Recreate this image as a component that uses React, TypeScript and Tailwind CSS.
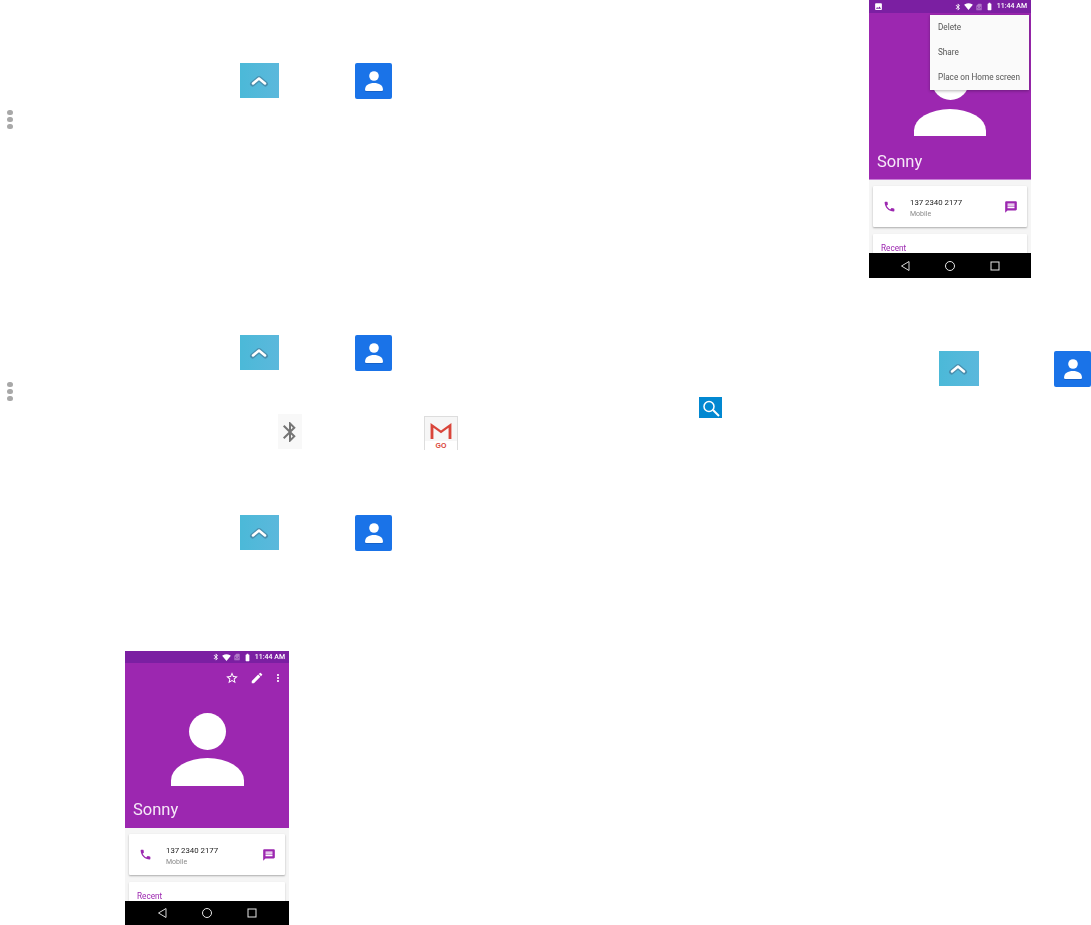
import { MdBluetooth, MdEdit, MdMoreVert, MdPhone, MdSignalWifi4Bar, MdStarBorder, MdMessage, MdImage, MdBatteryFull, MdSimCard } from "react-icons/md";

function ChevronTile({ className }: { className: string }) {
  return (
    <div className={`absolute h-[35px] bg-gradient-to-r from-[#4bb9d8] to-[#5bb8dc] flex items-center justify-center pr-[2px] ${className}`}>
      <svg width="20" height="14" viewBox="0 0 20 14" fill="none">
        <path d="M3.500 10 L10 4.500 L16.500 10" stroke="#4a8fae" strokeWidth="5" strokeLinecap="round" strokeLinejoin="round" />
        <path d="M4 9.500 L10 4.500 L16 9.500" stroke="#ffffff" strokeWidth="2.500" strokeLinecap="round" strokeLinejoin="round" />
      </svg>
    </div>
  );
}

function ContactTile({ className }: { className: string }) {
  return (
    <div className={`absolute w-[37px] h-[36px] rounded-[2px] bg-[#1a73e8] flex items-center justify-center ${className}`}>
      <svg width="20" height="23" viewBox="0 0 20 23">
        <path d="M1 21 C1 16 5 14 10 14 C15 14 19 16 19 21 Q19 22 17.500 22 L2.500 22 Q1 22 1 21 Z" fill="#0f4fa8" opacity="0.5" />
        <circle cx="10" cy="6" r="4.800" fill="#ffffff" />
        <path d="M1 20 C1 15 5 13 10 13 C15 13 19 15 19 20 Q19 21 17.500 21 L2.500 21 Q1 21 1 20 Z" fill="#ffffff" />
      </svg>
    </div>
  );
}

function Dots({ className }: { className: string }) {
  return (
    <div className={`absolute flex flex-col gap-[2px] ${className}`}>
      <div className="w-[6px] h-[5px] rounded-full bg-[#a8a8a8]" />
      <div className="w-[6px] h-[5px] rounded-full bg-[#a8a8a8]" />
      <div className="w-[6px] h-[5px] rounded-full bg-[#a8a8a8]" />
    </div>
  );
}

function Phone({ className, menu }: { className: string; menu?: boolean }) {
  return (
    <div className={`absolute flex flex-col overflow-hidden bg-[#f5f5f5] blur-[0.35px] ${className}`} style={{ fontFamily: "Roboto, sans-serif" }}>
      <div className={`shrink-0 bg-[#7b1fa2] flex items-center pl-[5px] pr-[4px] text-white ${menu ? "h-[13px]" : "h-[12px]"}`}>
        {menu ? <MdImage size={9} /> : null}
        <div className="ml-auto flex items-center gap-[2px]">
          <MdBluetooth size={8} />
          <MdSignalWifi4Bar size={9} />
          <MdSimCard size={8} className="opacity-40" />
          <MdBatteryFull size={9} />
          <span className="ml-[1px] text-[7px] leading-none font-medium">11:44 AM</span>
        </div>
      </div>
      <div className={`shrink-0 bg-[#9c27b0] flex flex-col ${menu ? "h-[167px] border-b border-[#c77fd6]" : "h-[165px]"}`}>
        <div className="h-[30px] shrink-0 flex items-center justify-end pr-[5px] text-white">
          {menu ? null : (
            <>
              <MdStarBorder size={14} />
              <MdEdit size={14} className="ml-[11px]" />
              <MdMoreVert size={12} className="ml-[8px]" />
            </>
          )}
        </div>
        <div className="flex flex-col items-center mt-[20px]">
          <div className="w-[37px] h-[37px] rounded-full bg-white" />
          <div className={`bg-white rounded-t-[50%_80%] ${menu ? "mt-[9px] w-[72px] h-[27px]" : "mt-[8px] w-[73px] h-[28px]"}`} />
        </div>
        <div className={`mt-auto pl-[8px] text-[16.5px] leading-[20px] text-[#f6e9f8] ${menu ? "pb-[7px]" : "pb-[8px]"}`}>Sonny</div>
      </div>
      <div className="flex-1 min-h-0 overflow-hidden px-[4px] pt-[6px] flex flex-col gap-[7px]">
        <div className="h-[41px] shrink-0 bg-white rounded-[1px] shadow-[0_1px_2px_rgba(0,0,0,0.3)] flex items-center pl-[10px] pr-[9px]">
          <MdPhone size={13} className="text-[#9c27b0]" />
          <div className="ml-[14px] mt-[4px] flex flex-col">
            <span className="text-[7.800px] leading-[12px] text-[#222222]">137 2340 2177</span>
            <span className="text-[7px] leading-[11px] text-[#8a8a8a]">Mobile</span>
          </div>
          <MdMessage size={14} className="ml-auto text-[#9c27b0]" />
        </div>
        <div className="h-[30px] shrink-0 bg-white rounded-[1px] shadow-[0_1px_2px_rgba(0,0,0,0.2)] pl-[8px] pt-[9px] text-[8.200px] leading-[11px] text-[#9c27b0]">Recent</div>
      </div>
      <div className={`shrink-0 bg-black flex items-center justify-center gap-[31px] ${menu ? "h-[25px]" : "h-[24px]"}`}>
        <svg width="14" height="14" viewBox="0 0 14 14" fill="none">
          <path d="M11 2.500 L3.500 7 L11 11.500 Z" stroke="#d8d8d8" strokeWidth="1" />
        </svg>
        <svg width="14" height="14" viewBox="0 0 14 14" fill="none">
          <circle cx="7" cy="7" r="4.500" stroke="#e8e8e8" strokeWidth="1" />
        </svg>
        <svg width="14" height="14" viewBox="0 0 14 14" fill="none">
          <rect x="3" y="3" width="8" height="8" stroke="#e8e8e8" strokeWidth="1" />
        </svg>
      </div>
      {menu ? (
        <div className="absolute left-[61px] top-[15px] w-[99px] h-[75px] bg-[#fafafa] shadow-[0_1px_3px_rgba(0,0,0,0.3)] flex flex-col pl-[8px] text-[8.200px] text-[#555555]">
          <span className="h-[25px] leading-[25px]">Delete</span>
          <span className="h-[25px] leading-[25px]">Share</span>
          <span className="h-[25px] leading-[25px]">Place on Home screen</span>
        </div>
      ) : null}
    </div>
  );
}

export default function App() {
  return (
    <div className="relative w-[1091px] h-[925px] bg-white overflow-hidden">
      <ChevronTile className="left-[240px] top-[63px] w-[39px]" />
      <ContactTile className="left-[355px] top-[63px]" />
      <Dots className="left-[7px] top-[110px]" />

      <Phone className="left-[869px] top-0 w-[162px] h-[278px]" menu />

      <ChevronTile className="left-[240px] top-[335px] w-[39px]" />
      <ContactTile className="left-[355px] top-[335px]" />
      <Dots className="left-[7px] top-[382px]" />

      <ChevronTile className="left-[939px] top-[351px] w-[40px]" />
      <ContactTile className="left-[1054px] top-[351px]" />

      <div className="absolute left-[699px] top-[397px] w-[23px] h-[21px] bg-[#0288d1] flex items-center justify-center">
        <svg width="20" height="18" viewBox="0 0 20 18" fill="none">
          <circle cx="8" cy="7.500" r="5" stroke="#ffffff" strokeWidth="1.500" />
          <path d="M12 11 L18 17" stroke="#ffffff" strokeWidth="2" />
        </svg>
      </div>

      <div className="absolute left-[278px] top-[414px] w-[24px] h-[35px] bg-[#f8f8f8] flex items-center justify-center text-[#757575]">
        <MdBluetooth size={28} />
      </div>

      <div className="absolute left-[424px] top-[416px] w-[34px] h-[34px] bg-[#f6f6f6] border-t border-l border-r border-[#dddddd] flex flex-col items-center" style={{ fontFamily: "Liberation Sans, sans-serif" }}>
        <svg width="24" height="19" viewBox="0 0 24 19" className="mt-[5px]">
          <path d="M1 1 L12 9 L23 1 L23 18 L20 18 L20 6 L12 12 L4 6 L4 18 L1 18 Z" fill="#d9453a" />
        </svg>
        <div className="mt-[1px] w-full flex-1 bg-white flex justify-center">
          <span className="text-[7px] leading-[9px] font-bold text-[#d9453a]">GO</span>
        </div>
      </div>

      <ChevronTile className="left-[240px] top-[515px] w-[39px]" />
      <ContactTile className="left-[355px] top-[515px]" />

      <Phone className="left-[125px] top-[651px] w-[164px] h-[274px]" />
    </div>
  );
}
